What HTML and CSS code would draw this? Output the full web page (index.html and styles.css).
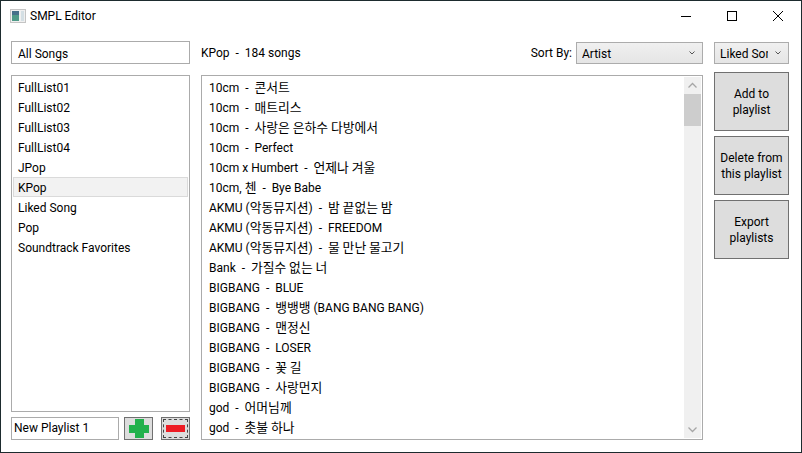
FILE: index.html
```html
<!DOCTYPE html>
<html lang="en">
<head>
  <meta charset="UTF-8">
  <title>SMPL Editor</title>
  <link rel="stylesheet" href="styles.css">
</head>
<body>
  <div class="window">
    <header class="titlebar">
      <svg class="app-icon" width="16" height="14" viewBox="0 0 16 14">
        <rect x="0.5" y="0.5" width="15" height="13" fill="#f0f0f0" stroke="#c4c4c4"/>
        <rect x="2" y="2" width="7" height="10" fill="#4f9a88"/>
        <rect x="2" y="2" width="7" height="4" fill="#46708a"/>
        <rect x="11" y="2" width="3" height="10" fill="#d4dfe4"/>
      </svg>
      <span class="title">SMPL Editor</span>
      <div class="caption-btns">
        <svg class="caption-btn" width="46" height="30" viewBox="0 0 46 30"><path d="M18 15.5h10" stroke="#000" fill="none"/></svg>
        <svg class="caption-btn" width="46" height="30" viewBox="0 0 46 30"><rect x="18.5" y="10.5" width="9" height="9" stroke="#000" fill="none"/></svg>
        <svg class="caption-btn" width="46" height="30" viewBox="0 0 46 30"><path d="M18 10l10 10M28 10l-10 10" stroke="#000" fill="none"/></svg>
      </div>
    </header>

    <main class="content">
      <aside class="left">
        <div class="field all-songs">All Songs</div>
        <ul class="list playlists">
          <li>FullList01</li>
          <li>FullList02</li>
          <li>FullList03</li>
          <li>FullList04</li>
          <li>JPop</li>
          <li class="selected">KPop</li>
          <li>Liked Song</li>
          <li>Pop</li>
          <li>Soundtrack Favorites</li>
        </ul>
        <div class="new-row">
          <div class="field new-name">New Playlist 1</div>
          <button class="btn icon-btn">
            <svg width="20" height="19" viewBox="0 0 20 19"><path d="M6 0h9v6h5v8h-5v5H6v-5H0V6h6z" fill="#22b14c"/></svg>
          </button>
          <button class="btn icon-btn focused">
            <svg width="19" height="7" viewBox="0 0 19 7"><rect width="19" height="7" fill="#ed1c24"/></svg>
          </button>
        </div>
      </aside>

      <section class="middle">
        <div class="toolbar">
          <span class="count">KPop &nbsp;-&nbsp; 184 songs</span>
          <span class="sort-label">Sort By:</span>
          <div class="combo sort-combo">
            <span class="combo-text">Artist</span>
            <svg class="chevron" width="6" height="4" viewBox="0 0 6 4"><path d="M0.5 0.5L3 3l2.5-2.5" stroke="#555" fill="none"/></svg>
          </div>
        </div>
        <div class="songs-box">
          <ul class="list songs">
            <li>10cm &nbsp;-&nbsp; <span class="ko">콘서트</span></li>
            <li>10cm &nbsp;-&nbsp; <span class="ko">매트리스</span></li>
            <li>10cm &nbsp;-&nbsp; <span class="ko">사랑은 은하수 다방에서</span></li>
            <li>10cm &nbsp;-&nbsp; Perfect</li>
            <li>10cm x Humbert &nbsp;-&nbsp; <span class="ko">언제나 겨울</span></li>
            <li>10cm, <span class="ko">첸</span> &nbsp;-&nbsp; Bye Babe</li>
            <li>AKMU (<span class="ko">악동뮤지션</span>) &nbsp;-&nbsp; <span class="ko">밤 끝없는 밤</span></li>
            <li>AKMU (<span class="ko">악동뮤지션</span>) &nbsp;-&nbsp; FREEDOM</li>
            <li>AKMU (<span class="ko">악동뮤지션</span>) &nbsp;-&nbsp; <span class="ko">물 만난 물고기</span></li>
            <li>Bank &nbsp;-&nbsp; <span class="ko">가질수 없는 너</span></li>
            <li>BIGBANG &nbsp;-&nbsp; BLUE</li>
            <li>BIGBANG &nbsp;-&nbsp; <span class="ko">뱅뱅뱅</span> (BANG BANG BANG)</li>
            <li>BIGBANG &nbsp;-&nbsp; <span class="ko">맨정신</span></li>
            <li>BIGBANG &nbsp;-&nbsp; LOSER</li>
            <li>BIGBANG &nbsp;-&nbsp; <span class="ko">꽃 길</span></li>
            <li>BIGBANG &nbsp;-&nbsp; <span class="ko">사랑먼지</span></li>
            <li>god &nbsp;-&nbsp; <span class="ko">어머님께</span></li>
            <li>god &nbsp;-&nbsp; <span class="ko">촛불 하나</span></li>
          </ul>
          <div class="scrollbar">
            <svg class="arrow" width="17" height="17" viewBox="0 0 17 17"><path d="M4.5 10.5l4-4 4 4" stroke="#a6a6a6" stroke-width="1.3" fill="none"/></svg>
            <div class="thumb"></div>
            <svg class="arrow arrow-down" width="17" height="17" viewBox="0 0 17 17"><path d="M4.5 6.5l4 4 4-4" stroke="#a6a6a6" stroke-width="1.3" fill="none"/></svg>
          </div>
        </div>
      </section>

      <aside class="right">
        <div class="combo liked-combo">
          <span class="combo-text">Liked Song</span>
          <svg class="chevron" width="6" height="4" viewBox="0 0 6 4"><path d="M0.5 0.5L3 3l2.5-2.5" stroke="#555" fill="none"/></svg>
        </div>
        <button class="btn action">Add to<br>playlist</button>
        <button class="btn action">Delete from<br>this playlist</button>
        <button class="btn action">Export<br>playlists</button>
      </aside>
    </main>
  </div>
</body>
</html>
```

FILE: styles.css
```css
html, body { margin: 0; height: 100%; }
body { font-family: Roboto, "Noto Sans CJK KR", sans-serif; font-size: 12px; color: #000; background: #fff; overflow: hidden; }
ul { list-style: none; margin: 0; padding: 0; }
.ko { font-family: "Noto Sans CJK KR", sans-serif; font-size: 12.8px; line-height: 0; }

.window { box-sizing: border-box; width: 802px; height: 453px; background: #fff; border: 1px solid #1d2b2e; display: flex; flex-direction: column; }

/* title bar */
.titlebar { height: 30px; display: flex; align-items: center; padding-left: 9px; flex: none; }
.title { margin-left: 4px; }
.caption-btns { margin-left: auto; display: flex; }
.caption-btn { display: block; }

.content { flex: 1; display: flex; padding: 10px 12px 12px 10px; min-height: 0; }

/* left column */
.left { width: 179px; display: flex; flex-direction: column; flex: none; }
.field { box-sizing: border-box; border: 1px solid #ababab; height: 23px; line-height: 23px; background: #fff; }
.all-songs { padding-left: 6px; line-height: 25px; }
.list li { height: 20px; line-height: 22px; padding-left: 5px; white-space: nowrap; }
.playlists { box-sizing: border-box; flex: 1; margin-top: 11px; border: 1px solid #ababab; padding: 1px; }
.playlists .selected { background: #f2f2f2; border: 1px solid #dadada; box-sizing: border-box; line-height: 20px; padding-left: 4px; }
.new-row { display: flex; margin-top: 5px; height: 23px; flex: none; }
.new-name { width: 108px; padding-left: 2px; line-height: 21px; }

/* buttons */
.btn { box-sizing: border-box; font: inherit; color: #000; background: #ddd; border: 1px solid #707070; padding: 0; display: flex; align-items: center; justify-content: center; }
.icon-btn { width: 29px; height: 23px; }
.icon-btn:first-of-type { margin-left: 5px; }
.icon-btn + .icon-btn { margin-left: 8px; }
.focused { outline: 1px dashed #444; outline-offset: -3px; }

/* middle column */
.middle { width: 502px; margin-left: 11px; display: flex; flex-direction: column; flex: none; }
.toolbar { height: 23px; display: flex; align-items: center; }
.count { flex: 1; padding-top: 1px; }
.sort-label { margin-right: 4px; padding-top: 1px; }
.combo { box-sizing: border-box; height: 22px; margin-top: 1px; border: 1px solid #acacac; background: linear-gradient(#f0f0f0, #e5e5e5); display: flex; align-items: center; padding-left: 5px; }
.sort-combo { width: 127px; }
.combo-text { flex: 1; overflow: hidden; white-space: nowrap; padding-top: 1px; }
.chevron { flex: none; margin: 0 7px 1px 7px; }

.songs-box { box-sizing: border-box; flex: 1; margin-top: 11px; border: 1px solid #ababab; display: flex; min-height: 0; overflow: hidden; }
.songs { flex: 1; padding: 1px 1px; overflow: hidden; }
.songs li { padding-left: 6px; }
.scrollbar { width: 17px; margin: 1px; background: #f0f0f0; display: flex; flex-direction: column; flex: none; }
.arrow { display: block; flex: none; }
.arrow-down { margin-top: auto; }
.thumb { height: 32px; background: #cdcdcd; }

/* right column */
.right { width: 75px; margin-left: 11px; display: flex; flex-direction: column; flex: none; }
.liked-combo { width: 75px; }
.action { height: 59px; margin-top: 5px; padding-top: 1px; line-height: 16px; text-align: center; }
.liked-combo + .action { margin-top: 8px; }
```
